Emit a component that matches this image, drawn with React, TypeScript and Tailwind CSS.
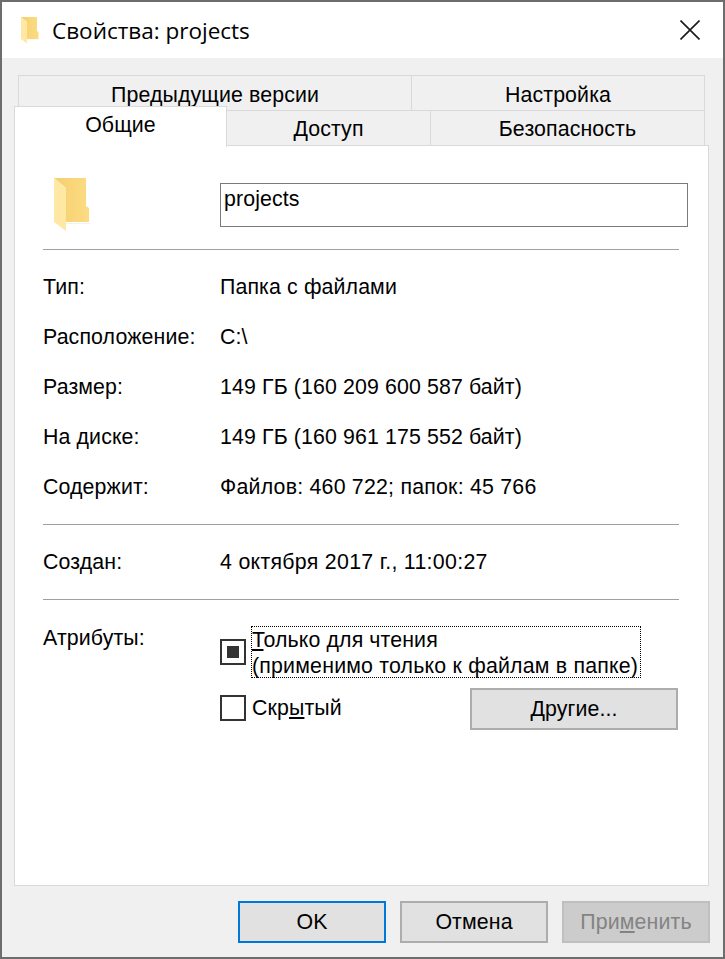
import React from 'react';

const FolderIcon = ({ className, id }: { className: string; id: string }) => (
    <svg viewBox="0 0 36 54" className={className}>
        <defs>
            <linearGradient id={`${id}-back`} x1="0" y1="0" x2="1" y2="0">
                <stop offset="0" stopColor="#f5cf6f" />
                <stop offset="1" stopColor="#fcdc82" />
            </linearGradient>
        </defs>
        <path d="M12 44 L35 44 L35 30 L32 28 L32 0 L0 0 L12 10 Z" fill={`url(#${id}-back)`} />
        <path d="M0 0 L12 10 L12 53 L0 44 Z" fill="#fee8a4" />
        <path d="M12 45 H38 V46 H12 Z" fill="#000000" opacity="0.05" />
    </svg>
);

const Tab = ({ label, className }: { label: string; className: string }) => (
    <div className={`flex items-center justify-center bg-[#f0f0f0] border-t border-l border-[#d9d9d9] ${className}`}>
        {label}
    </div>
);

const InfoRow = ({ label, value, valueClass = '' }: { label: string; value: string; valueClass?: string }) => (
    <div className="flex h-[50px] items-center">
        <div className="w-[177px]">{label}</div>
        <div className={valueClass}>{value}</div>
    </div>
);

const Divider = () => <div className="h-px w-[636px] bg-[#a0a0a0]" />;

const Checkbox = ({ checked }: { checked?: boolean }) => (
    <div className="flex h-[26px] w-[26px] shrink-0 items-center justify-center border-2 border-[#333333] bg-white">
        {checked && <div className="h-[12px] w-[12px] bg-[#333333]" />}
    </div>
);

const Button = ({ children, className }: { children: React.ReactNode; className: string }) => (
    <div className={`flex h-[42px] items-center justify-center border-2 ${className}`}>{children}</div>
);

export default function App() {
    return (
        <div
            className="flex h-[959px] w-[725px] flex-col border-2 border-[#6d6d6d] bg-[#f0f0f0] text-[21.33px] leading-[26px] tracking-[0.12px] text-black"
            style={{ fontFamily: '"Liberation Sans", Arial, sans-serif' }}
        >
            {/* title bar */}
            <div className="flex h-[56px] shrink-0 items-center bg-white pl-[19px] pr-[23px]">
                <FolderIcon id="small" className="h-[27px] w-[18px]" />
                <div className="ml-[13px] pt-[2px] text-[22.5px] tracking-normal" style={{ fontFamily: '"Open Sans", sans-serif' }}>
                    Свойства: projects
                </div>
                <svg viewBox="0 0 20 20" className="ml-auto h-[20px] w-[20px]">
                    <path d="M0.5 0.5 L19.5 19.5 M19.5 0.5 L0.5 19.5" stroke="#1a1a1a" strokeWidth="1.6" fill="none" />
                </svg>
            </div>

            <div className="flex flex-1 flex-col pl-[12px] pt-[17px]">
                {/* tabs, two rows */}
                <div className="ml-[4px] flex h-[35px] w-[687px]">
                    <Tab label="Предыдущие версии" className="w-[393px] pt-[3px]" />
                    <Tab label="Настройка" className="flex-1 border-r pt-[3px]" />
                </div>
                <div className="relative flex h-[35px] w-[691px]">
                    <div className="relative z-10 -mt-[4px] flex h-[41px] w-[213px] justify-center border-l border-r border-t border-[#d9d9d9] bg-white pt-[5px]">
                        Общие
                    </div>
                    <Tab label="Доступ" className="w-[203px] border-l-0 pt-[2px]" />
                    <Tab label="Безопасность" className="w-[275px] border-r pt-[2px]" />
                </div>

                {/* panel */}
                <div className="h-[741px] w-[695px] border border-[#d9d9d9] bg-white pl-[28px]">
                    <div className="flex pt-[37px]">
                        <FolderIcon id="large" className="-mb-[5px] ml-[11px] -mt-[5px] h-[54px] w-[36px]" />
                        <div className="ml-[130px] h-[44px] w-[468px] border border-[#7a7a7a] pl-[3px] pt-[2px]">
                            projects
                        </div>
                    </div>
                    <div className="mt-[22px]">
                        <Divider />
                    </div>
                    <div className="mt-[12px]">
                        <InfoRow label="Тип:" value="Папка с файлами" />
                        <InfoRow label="Расположение:" value="C:\" />
                        <InfoRow label="Размер:" value="149 ГБ (160 209 600 587 байт)" />
                        <InfoRow label="На диске:" value="149 ГБ (160 961 175 552 байт)" />
                        <InfoRow label="Содержит:" value="Файлов: 460 722; папок: 45 766" valueClass="tracking-[0.22px]" />
                    </div>
                    <div className="mt-[12px]">
                        <Divider />
                    </div>
                    <div className="mt-[12px]">
                        <InfoRow label="Создан:" value="4 октября 2017 г., 11:00:27" valueClass="tracking-[0.3px]" />
                    </div>
                    <div className="mt-[12px]">
                        <Divider />
                    </div>
                    <div className="mt-[14px] flex">
                        <div className="w-[177px] pt-[11px]">Атрибуты:</div>
                        <div className="w-[460px] pt-[12px]">
                            <div className="flex items-center">
                                <Checkbox checked />
                                <div className="ml-[5px] h-[52px] w-[390px] whitespace-nowrap border border-dotted border-black">
                                    <u className="underline-offset-2">Т</u>олько для чтения
                                    <br />
                                    <span className="tracking-[0.2px]">(применимо только к файлам в папке)</span>
                                </div>
                            </div>
                            <div className="mt-[10px] flex items-start">
                                <div className="mt-[7px]">
                                    <Checkbox />
                                </div>
                                <div className="ml-[6px] mt-[7px]">
                                    Скр<u className="underline-offset-2">ы</u>тый
                                </div>
                                <Button className="ml-auto mr-[2px] w-[208px] border-[#adadad] bg-[#e1e1e1]">
                                    <span>
                                        <u className="underline-offset-2">Д</u>ругие...
                                    </span>
                                </Button>
                            </div>
                        </div>
                    </div>
                </div>

                {/* bottom buttons */}
                <div className="ml-[224px] mt-[15px] flex gap-[14px]">
                    <Button className="w-[148px] border-[#0078d7] bg-[#e1e1e1]">OK</Button>
                    <Button className="w-[148px] border-[#adadad] bg-[#e1e1e1]">Отмена</Button>
                    <Button className="w-[148px] border-[#bfbfbf] bg-[#cccccc] text-[#838383]">
                        <span>
                            При<u className="underline-offset-2">м</u>енить
                        </span>
                    </Button>
                </div>
            </div>
        </div>
    );
}
